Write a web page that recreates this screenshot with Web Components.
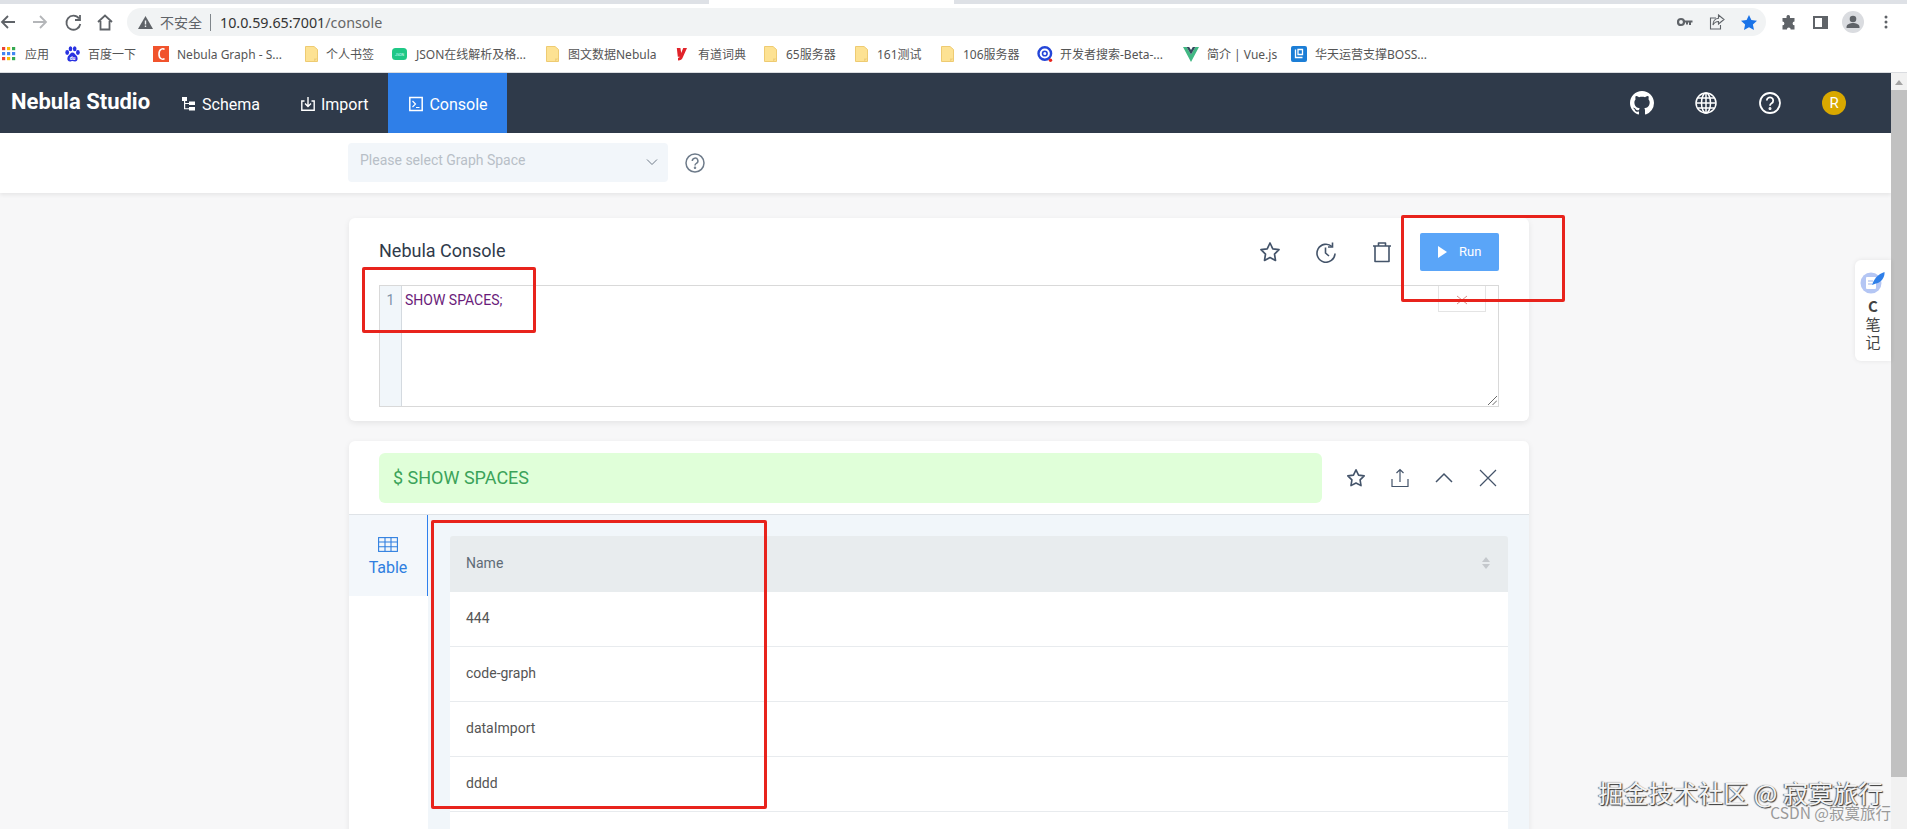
<!DOCTYPE html>
<html>
<head>
<meta charset="utf-8">
<title>Nebula Studio</title>
<style>
  html, body { margin: 0; height: 829px; overflow: hidden; background: #f7f7f8; }
  body { display: flex; flex-direction: column; font-family: Roboto, "Noto Sans CJK SC", sans-serif; }
</style>
</head>
<body>
<browser-chrome url="10.0.59.65:7001/console">
  <book-mark kind="grid" at="2" gap="9" width="14">应用</book-mark>
  <book-mark kind="baidu" at="65" gap="8">百度一下</book-mark>
  <book-mark kind="c" at="153" gap="8">Nebula Graph - S...</book-mark>
  <book-mark kind="folder" at="305" gap="8">个人书签</book-mark>
  <book-mark kind="json" at="392" gap="9">JSON在线解析及格...</book-mark>
  <book-mark kind="folder" at="546" gap="9">图文数据Nebula</book-mark>
  <book-mark kind="youdao" at="676" gap="10">有道词典</book-mark>
  <book-mark kind="folder" at="764" gap="9">65服务器</book-mark>
  <book-mark kind="folder" at="855" gap="9">161测试</book-mark>
  <book-mark kind="folder" at="941" gap="9">106服务器</book-mark>
  <book-mark kind="target" at="1037" gap="7">开发者搜索-Beta-...</book-mark>
  <book-mark kind="vue" at="1183" gap="8">简介 | Vue.js</book-mark>
  <book-mark kind="boss" at="1291" gap="8">华天运营支撑BOSS...</book-mark>
</browser-chrome>
<app-shell>
  <studio-nav></studio-nav>
  <space-bar></space-bar>
  <console-card></console-card>
  <output-card>
    <space-row>444</space-row>
    <space-row>code-graph</space-row>
    <space-row>dataImport</space-row>
    <space-row>dddd</space-row>
    <space-row></space-row>
  </output-card>
</app-shell>
<note-box style="left:362px;top:267px;width:174px;height:66px"></note-box>
<note-box style="left:1401px;top:215px;width:164px;height:87px"></note-box>
<note-box style="left:431px;top:520px;width:336px;height:289px"></note-box>
<side-note></side-note>
<water-mark></water-mark>
<script>
const ICONS = {
  grid: '<svg width="14" height="14" viewBox="0 0 14 14">' +
    [[0,'#ea4335'],[5,'#fbbc05'],[10,'#34a853']].map(([x,c]) => [0,5,10].map(y => `<rect x="${x}" y="${y}" width="3.2" height="3.2" fill="${y==5?'#4285f4':c}"/>`).join('')).join('') + '</svg>',
  baidu: '<svg width="15" height="16" viewBox="0 0 15 16" fill="#2932e1"><ellipse cx="2.2" cy="6.5" rx="1.9" ry="2.4"/><ellipse cx="5.5" cy="2.8" rx="1.8" ry="2.5"/><ellipse cx="9.7" cy="2.8" rx="1.8" ry="2.5"/><ellipse cx="12.9" cy="6.5" rx="1.9" ry="2.4"/><path d="M7.5 6.5c-2 0-2.6 2-4 3.2C2 11 1.6 15.5 5 15.5c1 0 1.6-.5 2.5-.5s1.500.5 2.500.5c3.400 0 3-4.500 1.500-5.800-1.400-1.200-2-3.200-4-3.200z"/><text x="7.500" y="14" font-size="5" text-anchor="middle" fill="#fff" font-family="Roboto" font-weight="700">du</text></svg>',
  c: '<svg width="16" height="16" viewBox="0 0 16 16"><rect width="16" height="16" fill="#f1532c"/><path d="M11.500 3.500c-1-1-5.500-1.500-5.500 4.500s4.500 5.500 5.500 4.500" fill="none" stroke="#fff" stroke-width="1.600"/></svg>',
  folder: '<svg width="13" height="16" viewBox="0 0 13 16"><path d="M.5.500h8.500l3.500 3v12H.5z" fill="#fde293" stroke="#eecb72"/><path d="M9 12.500h3.500L9 15.500z" fill="#f0cf7c"/></svg>',
  json: '<svg width="15" height="12" viewBox="0 0 15 12"><rect width="15" height="12" rx="3.500" fill="#1fc886"/><text x="7.500" y="7.600" font-size="3.600" text-anchor="middle" fill="#dff" font-family="Roboto">JSON</text></svg>',
  youdao: '<svg width="12" height="14" viewBox="0 0 12 14"><path d="M.8 1h3.600l.8 5 2-5h3.800L6.500 11c-.6 1.500-1.800 2.500-4.500 2.500v-2.700c1 0 1.400-.3 1.700-1H1.800z" fill="#e1232a"/></svg>',
  target: '<svg width="16" height="18" viewBox="0 0 16 18"><circle cx="7.800" cy="8.500" r="6.300" fill="none" stroke="#2446d8" stroke-width="2.400"/><circle cx="7.800" cy="8.500" r="2.300" fill="none" stroke="#2446d8" stroke-width="1.600"/><circle cx="13.500" cy="15.300" r="1.700" fill="#e8231c"/></svg>',
  vue: '<svg width="16" height="15" viewBox="0 0 16 15"><path d="M0 0h3.600L8 7.500 12.400 0H16L8 15z" fill="#41b883"/><path d="M3.600 0h2.600L8 3 9.800 0h2.600L8 7.500z" fill="#35495e"/></svg>',
  boss: '<svg width="16" height="16" viewBox="0 0 16 16"><rect width="16" height="16" rx="2" fill="#1c7ed6"/><path d="M4.500 3.500v8h7M7 3.500h4.500v5H7z" fill="none" stroke="#fff" stroke-width="1.300"/></svg>'
};

class BookMark extends HTMLElement {
  connectedCallback() {
    const root = this.attachShadow({ mode: 'open' });
    root.innerHTML = `
      <style>
        :host { display: flex; align-items: center; position: absolute; left: ${this.getAttribute('at')}px; top: 0; height: 36px; white-space: nowrap; }
        span { margin-left: ${this.getAttribute('gap')}px; font: 12px "Noto Sans", "Noto Sans CJK SC", sans-serif; color: #555; }
        .i { display: flex; margin: 0; }
      </style>
      <span class="i">${ICONS[this.getAttribute('kind')]}</span><span><slot></slot></span>`;
  }
}
customElements.define('book-mark', BookMark);

class BrowserChrome extends HTMLElement {
  connectedCallback() {
    const root = this.attachShadow({ mode: 'open' });
    root.innerHTML = `
      <style>
        :host { display: block; flex: none; background: #fff; }
        .tabs { height: 4px; background: #dee1e6; position: relative; }
        .tabs i { position: absolute; left: 709px; width: 245px; height: 4px; background: #fff; }
        .bar { height: 32px; padding-top: 4px; box-sizing: border-box; display: flex; align-items: center; background: #fff; }
        .nav { width: 127px; flex: none; display: flex; }
        .omni { flex: none; width: 1639px; height: 28px; background: #f1f3f4; border-radius: 14px; display: flex; align-items: center; font: 15px "Noto Sans", "Noto Sans CJK SC", sans-serif; color: #333; }
        .warn { margin-left: 11px; display: flex; }
        .insecure { margin-left: 7px; font-size: 14px; color: #5f6368; width: 50px; white-space: nowrap; }
        .sep { width: 1px; height: 17px; background: #80868b; }
        .url { margin-left: 9px; font-size: 14.300px; }
        .url b { font-weight: 400; color: #666; }
        .end { margin-left: auto; display: flex; align-items: center; gap: 16px; padding-right: 9px; }
        .tools { display: flex; align-items: center; gap: 12px; margin-left: 15px; }
        .books { position: relative; border-bottom: 1px solid #dadce0; box-sizing: border-box; height: 37px; }
      </style>
      <div class="tabs"><i></i></div>
      <div class="bar">
        <div class="nav">
          <svg width="127" height="20" viewBox="0 0 127 20" fill="none" stroke-width="1.800">
            <path d="M15 10H2M8 4l-6 6 6 6" stroke="#5f6368"/>
            <path d="M33 10h13M40 4l6 6-6 6" stroke="#b4b6b9"/>
            <path d="M79 6.500a7 7 0 1 0 1.300 5.500M80 3v5h-5" stroke="#5f6368"/>
            <path d="M98 10l7-6.500 7 6.500M100.500 9v8.500h9V9" stroke="#5f6368"/>
          </svg>
        </div>
        <div class="omni">
          <span class="warn"><svg width="15" height="13" viewBox="0 0 15 13"><path d="M7.500 0L15 13H0z" fill="#5f6368"/><rect x="6.800" y="4.500" width="1.400" height="4" fill="#f1f3f4"/><rect x="6.800" y="9.500" width="1.400" height="1.500" fill="#f1f3f4"/></svg></span>
          <span class="insecure">不安全</span><span class="sep"></span>
          <span class="url">10.0.59.65:7001<b>/console</b></span>
          <span class="end">
            <svg width="16" height="10" viewBox="0 0 16 10"><circle cx="4" cy="5" r="3" fill="none" stroke="#5f6368" stroke-width="2.200"/><path d="M7 3.500h8.500v2h-1.500v2.500h-2V5.500h-1v2H9V5.500H7z" fill="#5f6368"/></svg>
            <svg width="16" height="16" viewBox="0 0 16 16" fill="none" stroke="#5f6368" stroke-width="1.100"><path d="M7 4H1.500v11h10v-4"/><path d="M9.500 1L15 5.500 9.500 10V7.500C6.500 7.500 5 9 4 11c0-3.500 2-6.500 5.500-6.700z"/></svg>
            <svg width="16" height="15" viewBox="0 0 16 15"><path d="M8 0l2.400 5 5.600.7-4.100 3.800 1.100 5.500L8 12.300 3 15l1.100-5.500L0 5.700 5.600 5z" fill="#1a73e8"/></svg>
          </span>
        </div>
        <div class="tools">
          <svg width="15" height="15" viewBox="0 0 15 15"><path d="M5.500 1.500a1.800 1.800 0 0 1 3.500 0V3h4.500v3.500a1.900 1.900 0 0 0 0 3.800V14.500H9.700a1.900 1.900 0 0 0-3.800 0H1.500V10.300a1.900 1.900 0 0 0 0-3.800V3h4z" fill="#5f6368"/></svg>
          <svg width="15" height="13" viewBox="0 0 15 13" style="margin-left:5px"><rect x="1" y="1" width="13" height="11" fill="none" stroke="#5f6368" stroke-width="2"/><rect x="9" y="1" width="5" height="11" fill="#5f6368"/></svg>
          <svg width="22" height="22" viewBox="0 0 22 22" style="margin-left:2px"><circle cx="11" cy="11" r="11" fill="#dadce0"/><circle cx="11" cy="8" r="3.300" fill="#5f6368"/><path d="M4.500 16c0-3 4-4 6.500-4s6.500 1 6.500 4v1h-13z" fill="#5f6368"/></svg>
          <svg width="4" height="14" viewBox="0 0 4 14" fill="#5f6368" style="margin-left:8px"><circle cx="2" cy="2" r="1.500"/><circle cx="2" cy="7" r="1.500"/><circle cx="2" cy="12" r="1.500"/></svg>
        </div>
      </div>
      <div class="books"><slot></slot></div>`;
  }
}
customElements.define('browser-chrome', BrowserChrome);

// page body, the grey scroll track sits on the right of it
class AppShell extends HTMLElement {
  constructor() {
    super();
    this.attachShadow({ mode: 'open' }).innerHTML = `
      <style>
        :host { display: flex; flex: 1; min-height: 0; }
        .page { flex: 1; min-width: 0; overflow: hidden; }
        .track { width: 16px; flex: none; background: #f1f1f1; display: flex; flex-direction: column; align-items: center; }
        .up { width: 0; height: 0; margin: 7px 0 5px; border: 4px solid transparent; border-top: 0; border-bottom: 5px solid #a3a3a3; }
        .thumb { width: 16px; height: 687px; background: #c1c1c1; }
      </style>
      <div class="page"><slot></slot></div>
      <div class="track"><span class="up"></span><span class="thumb"></span></div>`;
  }
}
customElements.define('app-shell', AppShell);

class NavLink extends HTMLElement {
  constructor() {
    super();
    this.attachShadow({ mode: 'open' }).innerHTML = `
      <style>
        :host { display: flex; align-items: center; gap: 6px; height: 60px; padding: 2px 20px 0 20px; color: #fff; font-size: 16px; box-sizing: border-box; }
        :host([active]) { background: #2f7fe8; padding: 2px 19px 0 21px; }
        ::slotted(svg) { display: block; }
      </style>
      <slot name="icon"></slot><slot></slot>`;
  }
}
customElements.define('nav-link', NavLink);

class StudioNav extends HTMLElement {
  constructor() {
    super();
    this.attachShadow({ mode: 'open' }).innerHTML = `
      <style>
        :host { display: flex; align-items: center; height: 60px; background: #2f3a4a; }
        .logo { color: #fff; font: 700 22px Roboto, sans-serif; margin: -3px 0 0 11px; width: 151px; white-space: nowrap; }
        nav { display: flex; }
        .right { margin-left: auto; display: flex; align-items: center; gap: 40px; padding-right: 45px; margin-top: -1px; }
        .avatar { width: 24px; height: 24px; border-radius: 50%; background: #d9a800; color: #fff; font-size: 15px; display: flex; align-items: center; justify-content: center; }
      </style>
      <div class="logo">Nebula Studio</div>
      <nav>
        <nav-link style="padding-right:21px">
          <svg slot="icon" width="14" height="14" viewBox="0 0 14 14" fill="#fff"><rect x="0" y="0" width="5" height="4"/><rect x="7" y="4.500" width="6" height="3.500"/><rect x="7" y="10" width="6" height="3.500"/><path d="M2 4h1.200v2H7v1H3.200v4.200H7v1H2z"/></svg>
          Schema
        </nav-link>
        <nav-link>
          <svg slot="icon" width="14" height="14" viewBox="0 0 14 14" fill="none" stroke="#fff" stroke-width="1.400"><path d="M7 0v9M4 6.500L7 9.500 10 6.500M3.500 4H.8v9.200h12.400V4h-2.700"/></svg>
          Import
        </nav-link>
        <nav-link active>
          <svg slot="icon" width="14" height="16" viewBox="0 0 14 16" fill="none" stroke="#fff" stroke-width="1.500"><rect x=".8" y="1.500" width="12.400" height="13"/><path d="M3.500 5L6.500 8l-3 3M7 11.500h3.500" stroke-width="1.200"/></svg>
          Console
        </nav-link>
      </nav>
      <div class="right">
        <svg width="24" height="24" viewBox="0 0 16 16" fill="#fff"><path d="M8 0C3.580 0 0 3.580 0 8c0 3.540 2.290 6.530 5.470 7.590.4.070.55-.17.55-.38 0-.19-.01-.82-.01-1.490-2.010.37-2.530-.49-2.690-.94-.09-.23-.48-.94-.82-1.130-.28-.15-.68-.52-.01-.53.63-.01 1.080.58 1.230.82.72 1.210 1.870.87 2.330.66.070-.52.28-.87.51-1.070-1.780-.2-3.640-.89-3.640-3.950 0-.87.31-1.590.82-2.150-.08-.2-.36-1.020.08-2.120 0 0 .67-.21 2.200.82.64-.18 1.320-.27 2-.27.68 0 1.360.09 2 .27 1.530-1.040 2.200-.82 2.200-.82.44 1.100.16 1.920.08 2.120.51.56.82 1.270.82 2.150 0 3.070-1.870 3.750-3.650 3.950.29.25.54.73.54 1.480 0 1.070-.01 1.930-.01 2.200 0 .21.15.46.55.38A8.013 8.013 0 0 0 16 8c0-4.420-3.580-8-8-8z"/></svg>
        <svg width="24" height="24" viewBox="0 0 24 24" fill="none" stroke="#fff" stroke-width="1.500"><circle cx="12" cy="12" r="10"/><ellipse cx="12" cy="12" rx="4.500" ry="10"/><path d="M2 12h20M3.500 7h17M3.500 17h17M12 2v20"/></svg>
        <svg width="24" height="24" viewBox="0 0 24 24" fill="none" stroke="#fff" stroke-width="1.800"><circle cx="12" cy="12" r="10"/><path d="M8.800 9.500a3.200 3.200 0 1 1 4.800 2.800c-1 .6-1.600 1.200-1.600 2.400"/><circle cx="12" cy="17.500" r=".6"/></svg>
        <div class="avatar">R</div>
      </div>`;
  }
}
customElements.define('studio-nav', StudioNav);

class SpaceBar extends HTMLElement {
  constructor() {
    super();
    this.attachShadow({ mode: 'open' }).innerHTML = `
      <style>
        :host { display: flex; align-items: center; height: 60px; padding-left: 348px; background: #fff; box-shadow: 0 2px 4px rgba(0,0,0,.07); position: relative; }
        .select { width: 320px; height: 39px; margin-top: -2px; background: #f2f6fa; border-radius: 4px; display: flex; align-items: center; justify-content: space-between; padding: 0 10px 0 12px; box-sizing: border-box; color: #b8bfc7; font-size: 14px; }
        .select span { margin-top: -4px; }
        .help { margin-left: 17px; display: block; }
      </style>
      <div class="select"><span>Please select Graph Space</span>
        <svg width="12" height="8" viewBox="0 0 12 8" fill="none" stroke="#6f7a88" stroke-width="1"><path d="M1 1.500l5 5 5-5"/></svg>
      </div>
      <svg class="help" width="20" height="20" viewBox="0 0 20 20" fill="none" stroke="#6e7b8a" stroke-width="1.500"><circle cx="10" cy="10" r="9"/><path d="M7.300 8a2.800 2.800 0 1 1 4.100 2.400c-.9.500-1.400 1-1.400 2"/><circle cx="10" cy="14.800" r=".5"/></svg>`;
  }
}
customElements.define('space-bar', SpaceBar);

class ConsoleCard extends HTMLElement {
  constructor() {
    super();
    this.attachShadow({ mode: 'open' }).innerHTML = `
      <style>
        :host { display: block; width: 1180px; height: 203px; margin: 25px 0 0 349px; padding: 0 30px; box-sizing: border-box; background: #fff; border-radius: 6px; box-shadow: 0 2px 6px rgba(0,0,0,.08); }
        .head { display: flex; align-items: center; height: 67px; }
        h2 { margin: 0; font: 400 18px Roboto, sans-serif; color: #2f3a4a; flex: 1; transform: translateY(-1px); }
        .acts { display: flex; gap: 34px; align-items: center; margin-right: 27px; }
        .acts svg { display: block; }
        .run { width: 79px; height: 38px; background: #5aa5f8; border-radius: 2px; color: #fff; font-size: 13px; display: flex; align-items: center; gap: 12px; padding-left: 18px; box-sizing: border-box; }
        .editor { display: flex; height: 122px; box-sizing: border-box; border: 1px solid #d9d9d9; position: relative; }
        .gutter { width: 22px; background: #f1f6fa; border-right: 1px solid #d4dae0; color: #7f93a8; font-size: 14px; text-align: center; padding-top: 6px; box-sizing: border-box; }
        .code { padding: 6px 0 0 3px; font-size: 14px; color: #6a1b7a; }
        .fold { position: absolute; right: 12px; top: 0; width: 48px; height: 26px; border: 1px solid #e4e4e4; border-top: 0; box-sizing: border-box; display: flex; justify-content: center; }
        .grip { position: absolute; right: 1px; bottom: 1px; }
      </style>
      <div class="head">
        <h2>Nebula Console</h2>
        <div class="acts">
          <svg width="22" height="22" viewBox="0 0 22 22" fill="none" stroke="#44546a" stroke-width="1.700" stroke-linejoin="round"><path d="M11 2l2.800 5.800 6.200.9-4.500 4.400 1 6.300L11 16.500l-5.500 2.900 1-6.300L2 8.700l6.200-.9z"/></svg>
          <svg width="22" height="22" viewBox="0 0 22 22" fill="none" stroke="#44546a" stroke-width="1.600"><path d="M20 12.500A9 9 0 1 1 17 5.500"/><path d="M10.500 6.500V12l3.500 3M17.500 1.500V6H13"/></svg>
          <svg width="22" height="22" viewBox="0 0 22 22" fill="none" stroke="#44546a" stroke-width="1.600" stroke-linejoin="round"><path d="M2 5h18M7.500 5V2h7v3M4 5v15.500h14V5"/></svg>
        </div>
        <div class="run"><svg width="9" height="12" viewBox="0 0 9 12" fill="#fff"><path d="M0 0l9 6-9 6z"/></svg>Run</div>
      </div>
      <div class="editor">
        <div class="gutter">1</div>
        <div class="code">SHOW SPACES;</div>
        <div class="fold"><svg width="12" height="20" viewBox="0 0 12 20" fill="none" stroke="#d98f88" stroke-width="1"><path d="M1 10l10 8M11 10L1 18"/></svg></div>
        <svg class="grip" width="9" height="9" viewBox="0 0 9 9" stroke="#444" stroke-width=".8"><path d="M0 9L9 0M4.500 9L9 4.500"/></svg>
      </div>`;
  }
}
customElements.define('console-card', ConsoleCard);

class SpaceRow extends HTMLElement {
  constructor() {
    super();
    this.attachShadow({ mode: 'open' }).innerHTML = `
      <style>
        :host { display: flex; align-items: center; height: 55px; padding: 0 0 2px 16px; box-sizing: border-box; background: #fff; border-bottom: 1px solid #e8ebee; font-size: 14px; color: #555; }
      </style>
      <slot></slot>`;
  }
}
customElements.define('space-row', SpaceRow);

class OutputCard extends HTMLElement {
  constructor() {
    super();
    this.attachShadow({ mode: 'open' }).innerHTML = `
      <style>
        :host { display: block; width: 1180px; margin: 20px 0 0 349px; background: #fff; border-radius: 6px 6px 0 0; box-shadow: 0 2px 6px rgba(0,0,0,.08); }
        .head { display: flex; align-items: center; height: 74px; padding: 0 30px; border-bottom: 1px solid #dfe3e7; box-sizing: border-box; }
        .cmd { flex: none; width: 943px; height: 50px; background: #e0ffd9; border-radius: 6px; color: #3ba35a; font-size: 18px; line-height: 50px; padding-left: 14px; box-sizing: border-box; }
        .acts { display: flex; align-items: center; gap: 24px; margin-left: 24px; }
        .acts svg { display: block; }
        .body { display: flex; height: 320px; }
        .side { width: 79px; flex: none; }
        .tab { height: 81px; background: #f3f7fb; border-right: 1px solid #2f80ed; box-sizing: border-box; display: flex; flex-direction: column; align-items: center; padding-top: 22px; color: #2f7fe0; font-size: 16px; }
        .tab svg { display: block; margin-bottom: 6px; }
        .result { flex: 1; background: #f1f6fa; padding: 21px 21px 0 22px; }
        .th { height: 56px; background: #e8ecee; display: flex; align-items: center; justify-content: space-between; padding: 0 18px 2px 16px; font-size: 14px; color: #5f6b76; box-sizing: border-box; border-radius: 3px 3px 0 0; }
        .sort { display: flex; flex-direction: column; gap: 2px; }
        .sort i { width: 0; height: 0; border: 4px solid transparent; }
        .sort i:first-child { border-top: 0; border-bottom: 5px solid #c4c8cc; }
        .sort i:last-child { border-bottom: 0; border-top: 5px solid #c4c8cc; }
      </style>
      <div class="head">
        <div class="cmd">$ SHOW SPACES</div>
        <div class="acts">
          <svg width="20" height="20" viewBox="0 0 22 22" fill="none" stroke="#44546a" stroke-width="1.800" stroke-linejoin="round"><path d="M11 2l2.800 5.800 6.200.9-4.500 4.400 1 6.300L11 16.500l-5.500 2.900 1-6.300L2 8.700l6.200-.9z"/></svg>
          <svg width="20" height="20" viewBox="0 0 20 20" fill="none" stroke="#44546a" stroke-width="1.200"><path d="M10 14V2M6.500 5L10 1.500 13.500 5M2 11v7.500h16V11"/></svg>
          <svg width="20" height="20" viewBox="0 0 20 20" fill="none" stroke="#44546a" stroke-width="1.500"><path d="M2 14l8-8 8 8"/></svg>
          <svg width="20" height="20" viewBox="0 0 20 20" fill="none" stroke="#44546a" stroke-width="1.200"><path d="M2 2l16 16M18 2L2 18"/></svg>
        </div>
      </div>
      <div class="body">
        <div class="side">
          <div class="tab">
            <svg width="20" height="15" viewBox="0 0 20 15" fill="none" stroke="#2f7fe0" stroke-width="1.100"><rect x=".6" y=".6" width="18.800" height="13.800"/><path d="M.6 5h18.800M.6 9.700h18.800M7 .6v13.800M13 .6v13.800"/></svg>
            Table
          </div>
        </div>
        <div class="result">
          <div class="th">Name<span class="sort"><i></i><i></i></span></div>
          <slot></slot>
        </div>
      </div>`;
  }
}
customElements.define('output-card', OutputCard);

// the red rectangles somebody drew over the screenshot
class NoteBox extends HTMLElement {
  constructor() {
    super();
    this.attachShadow({ mode: 'open' }).innerHTML = `
      <style>
        :host { position: absolute; box-sizing: border-box; border: 3px solid #e8231c; border-radius: 2px; pointer-events: none; }
      </style>`;
  }
}
customElements.define('note-box', NoteBox);

class SideNote extends HTMLElement {
  constructor() {
    super();
    this.attachShadow({ mode: 'open' }).innerHTML = `
      <style>
        :host { position: absolute; left: 1855px; top: 260px; width: 36px; height: 101px; background: #fff; border-radius: 6px 0 0 6px; box-shadow: 0 0 5px rgba(0,0,0,.08); display: flex; flex-direction: column; align-items: center; font: 15px/18px "Noto Sans CJK SC", sans-serif; color: #444; box-sizing: border-box; padding-top: 10px; }
        svg { display: block; margin-bottom: 3px; }
        b { font-weight: 700; }
      </style>
      <svg width="26" height="24" viewBox="0 0 26 24"><circle cx="11" cy="13" r="10.500" fill="#b4c6f4"/><rect x="6" y="7" width="10" height="12" rx="1" fill="#fff"/><path d="M8 11h5M8 14h4" stroke="#9db3ea" stroke-width="1"/><path d="M12 15C14 9 18 4 24.500 2c.5 5-3 10.500-8.500 11.500z" fill="#2f7fe8"/></svg>
      <b>C</b><span>笔</span><span>记</span>`;
  }
}
customElements.define('side-note', SideNote);

class WaterMark extends HTMLElement {
  constructor() {
    super();
    this.attachShadow({ mode: 'open' }).innerHTML = `
      <style>
        :host { position: absolute; right: 16px; top: 773px; display: flex; flex-direction: column; align-items: flex-end; font-family: "Noto Sans CJK SC", sans-serif; white-space: nowrap; pointer-events: none; }
        .big { font-size: 25px; line-height: 38px; margin-right: 8px; color: #f4f4f4; text-shadow: 1px 1px 1px #333, -1px 0 1px #666; }
        .small { font-size: 15.500px; line-height: 20px; margin-top: -9px; color: #9a9a9a; }
      </style>
      <div class="big">掘金技术社区 @ 寂寞旅行</div>
      <div class="small">CSDN @寂寞旅行</div>`;
  }
}
customElements.define('water-mark', WaterMark);
</script>
</body>
</html>
